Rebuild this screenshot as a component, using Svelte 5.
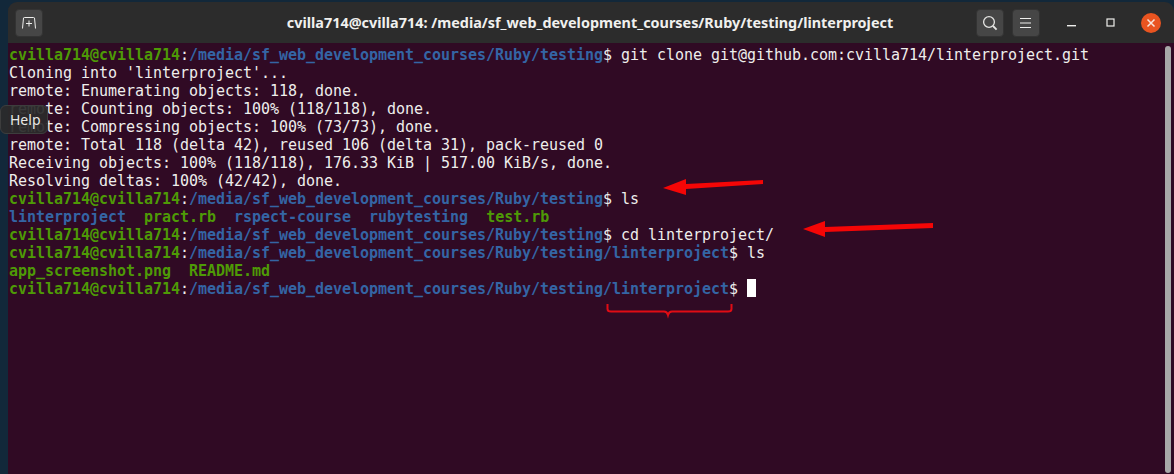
<script>
  const user = "cvilla714@cvilla714";
  const base = "/media/sf_web_development_courses/Ruby/testing";

  // each row of the terminal, prompts carry a path suffix and a command
  const rows = [
    { prompt: "", cmd: "git clone git@github.com:cvilla714/linterproject.git" },
    { text: "Cloning into 'linterproject'..." },
    { text: "remote: Enumerating objects: 118, done." },
    { text: "remote: Counting objects: 100% (118/118), done." },
    { text: "remote: Compressing objects: 100% (73/73), done." },
    { text: "remote: Total 118 (delta 42), reused 106 (delta 31), pack-reused 0" },
    { text: "Receiving objects: 100% (118/118), 176.33 KiB | 517.00 KiB/s, done." },
    { text: "Resolving deltas: 100% (42/42), done." },
    { prompt: "", cmd: "ls" },
    { files: [["linterproject", "dir"], ["pract.rb", "exe"], ["rspect-course", "dir"], ["rubytesting", "dir"], ["test.rb", "exe"]] },
    { prompt: "", cmd: "cd linterproject/" },
    { prompt: "/linterproject", cmd: "ls" },
    { files: [["app_screenshot.png", "exe"], ["README.md", "exe"]] },
    { prompt: "/linterproject", cmd: "", cursor: true },
  ];
</script>

<div class="desktop">
  <div class="window">
    <header class="titlebar">
      <button class="hb-btn new-tab" aria-label="New tab">
        <svg width="16" height="14" viewBox="0 0 16 14" fill="none" stroke="#eeeeec" stroke-width="1">
          <path d="M1.500 12.500 L2.500 2 Q2.600 1.500 3.500 1.500 H12.500 Q13.400 1.500 13.500 2 L14.500 12.500" />
          <path d="M8 4.500 V10.500 M5 7.500 H11" />
        </svg>
      </button>
      <div class="title">cvilla714@cvilla714: /media/sf_web_development_courses/Ruby/testing/linterproject</div>
      <div class="actions">
        <button class="hb-btn" aria-label="Search">
          <svg width="16" height="16" viewBox="0 0 16 16" fill="none" stroke="#e4e4e2" stroke-width="1.300">
            <circle cx="7" cy="7" r="5.400" />
            <path d="M11 11 L14.600 14.600" stroke-width="1.800" />
          </svg>
        </button>
        <button class="hb-btn" aria-label="Menu">
          <svg width="14" height="12" viewBox="0 0 14 12" stroke="#eeeeec" stroke-width="1">
            <path d="M1 1.500 H12 M1 6 H12 M1 10.500 H12" />
          </svg>
        </button>
        <div class="win-controls">
          <svg width="10" height="10" viewBox="0 0 10 10"><rect x="0" y="7" width="9" height="1.400" fill="#eeeeec" /></svg>
          <svg width="10" height="10" viewBox="0 0 10 10" fill="none"><rect x="1" y="1" width="7" height="7" stroke="#eeeeec" stroke-width="1.200" /></svg>
          <span class="close">
            <svg width="10" height="10" viewBox="0 0 10 10" stroke="#f8e6dc" stroke-width="1.500"><path d="M1.500 1.500 L8.500 8.500 M8.500 1.500 L1.500 8.500" /></svg>
          </span>
        </div>
      </div>
    </header>

    <main class="terminal">
      <div class="vbar"></div>
      {#each rows as row}
        <div class="line">
          {#if row.prompt !== undefined}
            <span class="green">{user}</span>:<span class="blue">{base}{row.prompt}</span>$ {row.cmd}{#if row.cursor}<span class="cursor"></span>{/if}
          {:else if row.files}
            {#each row.files as f, i}
              <span class={f[1] === "dir" ? "blue" : "green"}>{f[0]}</span>{i < row.files.length - 1 ? "  " : ""}
            {/each}
          {:else}
            {row.text}
          {/if}
        </div>
      {/each}
    </main>
  </div>

  <div class="tooltip">Help</div>

  <!-- red annotations drawn on top of the screenshot -->
  <svg class="marks" width="1174" height="474" viewBox="0 0 1174 474">
    <path d="M763 180 L686 184 L686 179 L663 188 L686 195 L686 189 L763 184 Z" fill="#f40606" />
    <path d="M933 223 L825 227 L825 221 L803 229 L825 237 L825 232 L933 228 Z" fill="#f40606" />
    <path d="M607.500 304 V309 Q607.500 311.500 611 311.500 H664 Q667 311.500 668 315 Q669 311.500 672 311.500 H728 Q731.500 311.500 731.500 309 V304" fill="none" stroke="#e00c14" stroke-width="2" />
  </svg>
</div>

<style>
  :global(body) {
    margin: 0;
    background: #12283a;
  }

  .desktop {
    position: relative;
    width: 1174px;
    height: 474px;
    overflow: hidden;
    background: #12283a;
    padding: 2px 0 0 8px;
    box-sizing: border-box;
  }

  .window {
    height: 472px;
    display: flex;
    flex-direction: column;
  }

  .titlebar {
    height: 41px;
    flex: none;
    display: flex;
    align-items: center;
    justify-content: space-between;
    background: #2c2c2c;
    border-radius: 9px 9px 0 0;
    padding: 0 13px 0 7px;
    position: relative;
  }

  .title {
    position: absolute;
    left: 0;
    right: 0;
    text-align: center;
    color: #f0f0ee;
    font: bold 14.4px "Noto Sans", "Open Sans", sans-serif;
    padding-right: 2px;
    pointer-events: none;
  }

  .hb-btn {
    width: 28px;
    height: 28px;
    padding: 0;
    border: 1px solid #333;
    border-radius: 4px;
    background: #464646;
    display: flex;
    align-items: center;
    justify-content: center;
  }

  .actions {
    display: flex;
    align-items: center;
    gap: 8px;
  }

  .win-controls {
    display: flex;
    align-items: center;
    gap: 29px;
    margin-left: 19px;
  }

  .close {
    width: 20px;
    height: 20px;
    border-radius: 50%;
    background: #e95420;
    display: flex;
    align-items: center;
    justify-content: center;
    margin-left: -4px;
  }

  .terminal {
    flex: 1;
    position: relative;
    background: #300a24;
    padding-top: 3px;
    padding-left: 1px;
    color: #eeeeec;
    font: 15px/18px "DejaVu Sans Mono", monospace;
    letter-spacing: -0.03px;
  }

  .line {
    height: 18px;
    white-space: pre;
  }

  .green {
    color: #4e9a06;
    font-weight: bold;
  }

  .blue {
    color: #3465a4;
    font-weight: bold;
  }

  .cursor {
    display: inline-block;
    width: 9px;
    height: 18px;
    background: #fff;
    vertical-align: top;
    margin-top: -1px;
  }

  .vbar {
    position: absolute;
    right: 3px;
    top: 3px;
    width: 6px;
    height: 427px;
    border-radius: 3px;
    background: #a8a8a8;
  }

  .tooltip {
    position: absolute;
    left: 0;
    top: 105px;
    width: 48px;
    height: 29px;
    box-sizing: border-box;
    padding: 4px 0 0 9px;
    background: rgba(43, 43, 43, 0.93);
    border: 1px solid #3d3d3d;
    border-radius: 6px;
    color: #e8e8e6;
    font: 14px "Noto Sans", sans-serif;
  }

  .marks {
    position: absolute;
    left: 0;
    top: 0;
    pointer-events: none;
  }
</style>
